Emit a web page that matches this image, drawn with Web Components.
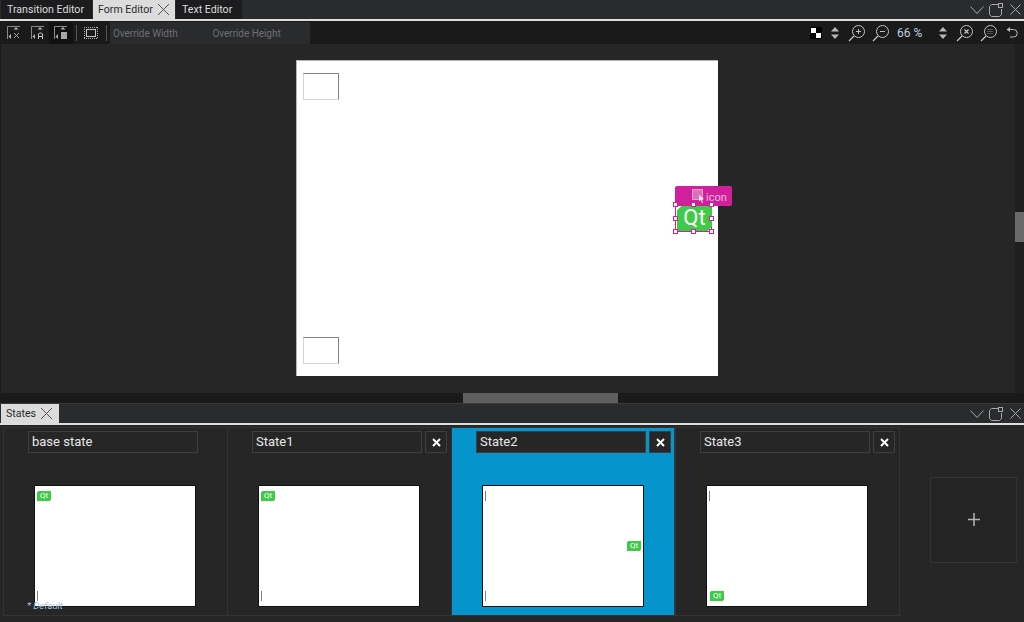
<!DOCTYPE html>
<html>
<head>
<meta charset="utf-8">
<title>Form Editor</title>
<style>
  html, body { margin: 0; height: 100%; background: #262626; overflow: hidden; }
  body { font-family: Roboto, "Noto Sans", sans-serif; font-size: 11px; color: #e6e6e6; }
  app-shell { width: 1024px; height: 622px; }
</style>
</head>
<body>
<app-shell>
  <dock-bar slot="top">
    <dock-tab style="width:91px">Transition Editor</dock-tab>
    <dock-tab style="width:82px" active closable>Form Editor</dock-tab>
    <dock-tab style="width:66px">Text Editor</dock-tab>
  </dock-bar>
  <form-toolbar slot="top"></form-toolbar>
  <form-view slot="top"></form-view>
  <dock-bar slot="bottom">
    <dock-tab style="width:58px" active closable>States</dock-tab>
  </dock-bar>
  <states-view slot="bottom">
    <state-card name="base state" qt="37,491" lines="37,591" base></state-card>
    <state-card name="State1" qt="261,491" lines="261,591"></state-card>
    <state-card name="State2" qt="627,541" lines="485,491;485,591" selected></state-card>
    <state-card name="State3" qt="710,591" lines="709,491"></state-card>
  </states-view>
</app-shell>

<script>
const CLOSE_X = `<svg width="13" height="13" viewBox="0 0 13 13"><path d="M1 1l11 11M12 1L1 12" stroke="currentColor" fill="none"/></svg>`;

class AppShell extends HTMLElement {
  constructor() {
    super();
    this.attachShadow({mode: 'open'}).innerHTML = `<style>
      :host { display: flex; flex-direction: column; }
      .top { display: flex; flex-direction: column; height: 404px; }
      .bottom { display: flex; flex-direction: column; height: 218px; }
    </style>
    <div class="top"><slot name="top"></slot></div>
    <div class="bottom"><slot name="bottom"></slot></div>`;
  }
}

class DockBar extends HTMLElement {
  constructor() {
    super();
    this.attachShadow({mode: 'open'}).innerHTML = `<style>
      :host { display: flex; height: 21px; box-sizing: border-box; background: #2a2b2d; padding-left: 1px;
        border-bottom: 2px solid #dedede; flex: none; color: #a8a8a8; }
      .tabs { display: flex; gap: 1px; flex: 1; }
      .buttons { display: flex; align-items: center; height: 19px; padding-right: 3px; box-sizing: border-box; }
      svg { display: block; flex: none; }
    </style>
    <div class="tabs"><slot></slot></div>
    <div class="buttons">
      <svg width="14" height="14" viewBox="0 0 14 14"><path d="M.5 3.500l6.500 7 6.500-7" stroke="currentColor" fill="none"/></svg>
      <svg style="margin:0 6px 0 5px" width="15" height="14" viewBox="0 0 15 14"><path d="M9 1.500H2.500l-2 2v8l2 2h8l2-2V6" stroke="currentColor" fill="none"/><rect x="9.500" y=".5" width="4" height="4" stroke="currentColor" fill="none"/></svg>
      <svg width="11" height="11" viewBox="0 0 11 11"><path d="M.5.5l10 10M10.500.5l-10 10" stroke="currentColor" fill="none"/></svg>
    </div>`;
  }
}

class DockTab extends HTMLElement {
  constructor() {
    super();
    this.attachShadow({mode: 'open'}).innerHTML = `<style>
      :host { display: flex; align-items: center; height: 19px; box-sizing: border-box;
        padding: 0 0 0 6px; background: #1c1c1e; color: #dcdcdc; font-size: 10.6px; white-space: nowrap; }
      :host([active]) { background: #dcdcdc; color: #2a2a2a; padding: 0 0 0 5px; gap: 4px; }
      svg { display: block; color: #555; flex: none; }
    </style><slot></slot>${this.hasAttribute('closable') ? CLOSE_X : ''}`;
  }
}

class FormToolbar extends HTMLElement {
  constructor() {
    super();
    const lens = inner => `<svg width="18" height="18" viewBox="0 0 18 18"><circle cx="10.500" cy="7.500" r="6" stroke="#c4c4c4" fill="none"/><path d="M6 12l-5 5" stroke="#c4c4c4" stroke-width="1.300" fill="none"/>${inner}</svg>`;
    const updown = `<svg width="10" height="12" viewBox="0 0 10 12"><path d="M5 0l4 4.500H1zM5 12l4-4.500H1z" fill="#b8b8b8"/></svg>`;
    const anchor = inner => `<svg width="14" height="14" viewBox="0 0 14 14"><path d="M.5 13V.5H13" stroke="#8a8a8a" fill="none"/><path d="M4 8l-2.500 2.500L4 13z" fill="#b0b0b0"/><path d="M9 1l2.500 2.500h-5z" fill="#b0b0b0"/>${inner}</svg>`;
    this.attachShadow({mode: 'open'}).innerHTML = `<style>
      :host { display: flex; align-items: center; height: 23px; box-sizing: border-box; border-top: 1px solid #1a1a1a; background: #1a1a1a; flex: none; padding-left: 7px; color: #6e7074; font-size: 10px; }
      svg { display: block; flex: none; }
      .sel { background: #111; width: 24px; height: 22px; display: flex; align-items: center; justify-content: center; margin: 0 3px 0 4px; }
      .sep { width: 1px; height: 16px; background: #555; flex: none; }
      .override { display: flex; align-items: center; width: 200px; height: 22px; margin-left: 3px; background: #2a2b2d; box-sizing: border-box; padding-left: 3px; }
      .override span { width: 100px; letter-spacing: -.05px; white-space: nowrap; }
      .override span + span { padding-left: 2px; }
      .right { margin-left: auto; display: flex; align-items: center; height: 22px; }
      .right > * { flex: none; }
      .check { width: 12px; height: 12px; background: #000; }
      .zoom { color: #bfd0e0; font-size: 12px; width: 41px; }
    </style>
    ${anchor('<path d="M7 7l5 5M12 7l-5 5" stroke="#a8a8a8" fill="none"/>')}
    <span style="width:10px"></span>
    ${anchor('<path d="M7.500 13V8l1-1h2l1 1v5M7.500 10.500h4" stroke="#c4c4c4" fill="none"/>')}
    <span class="sel">${anchor('<rect x="7" y="6" width="6" height="7" fill="#a8a8a8"/>')}</span>
    <span class="sep"></span>
    <svg style="margin:0 8px 0 7px" width="14" height="14" viewBox="0 0 14 14"><rect x="2.500" y="3.500" width="9" height="7" stroke="#c4c4c4" fill="none"/><path d="M0 1.500h14M0 12.500h14M.5 1v12M13.500 1v12" stroke="#b0b0b0" stroke-dasharray="1 1" fill="none"/></svg>
    <span class="sep"></span>
    <div class="override"><span>Override Width</span><span>Override Height</span></div>
    <div class="right">
      <svg class="check" viewBox="0 0 12 12"><rect x="1" y="1" width="5" height="5" fill="#fff"/><rect x="6" y="6" width="5" height="5" fill="#fff"/></svg>
      <span style="width:8px"></span>${updown}<span style="width:8px"></span>
      ${lens('<path d="M8 7.500h5M10.500 5v5" stroke="#c4c4c4" fill="none"/>')}
      <span style="width:6px"></span>
      ${lens('<path d="M8 7.500h5" stroke="#c4c4c4" fill="none"/>')}
      <span style="width:7px"></span>
      <span class="zoom">66 %</span>
      ${updown}<span style="width:8px"></span>
      ${lens('<path d="M8.500 5.500l4 4M12.500 5.500l-4 4" stroke="#c4c4c4" stroke-width="1.300" fill="none"/>')}
      <span style="width:6px"></span>
      ${lens('<path d="M7.500 5.500h6M7.500 7.500h6M7.500 9.500h6" stroke="#999" stroke-dasharray="1 1" fill="none"/>')}
      <span style="width:8px"></span>
      <svg width="12" height="12" viewBox="0 0 12 12"><path d="M3 2.500h4.500a3.500 3.500 0 0 1 0 7.500H4" stroke="#b8b8b8" fill="none"/><path d="M4 0v5L.5 2.500z" fill="#b8b8b8"/></svg>
      <span style="width:6px"></span>
    </div>`;
  }
}

class QtLogo extends HTMLElement {
  constructor() {
    super();
    this.attachShadow({mode: 'open'}).innerHTML = `<style>
      :host { --cut: 3px; display: flex; align-items: center; justify-content: center; color: #fff; line-height: 1;
        background: linear-gradient(135deg, transparent var(--cut), #3fcb47 var(--cut), #3fcb47 calc(100% - var(--cut)), transparent calc(100% - var(--cut))); }
    </style><slot></slot>`;
  }
}

class FormView extends HTMLElement {
  constructor() {
    super();
    const handles = [[0,0],[18,0],[36,0],[0,14],[36,14],[0,27],[18,27],[36,27]]
      .map(([x, y]) => `<i class="handle" style="left:${x}px;top:${y}px"></i>`).join('');
    this.attachShadow({mode: 'open'}).innerHTML = `<style>
      :host { display: grid; grid-template-columns: 1015px 9px; grid-template-rows: 349px 11px; flex: none; background: #262626; }
      .area { position: relative; padding: 16px 0 0 295px; border-left: 1px solid #1a1a1a; box-sizing: border-box; overflow: hidden; }
      .form { position: relative; width: 422px; height: 316px; background: #fff; box-shadow: inset 1px 1px 0 #b4b4b4; }
      .box { position: absolute; left: 7px; width: 34px; height: 25px; border: 1px solid #d4d4d4; border-top-color: #808080; border-right-color: #808080; }
      .label { position: absolute; left: 379px; top: 126px; width: 57px; height: 20px; background: #d0209c; border-radius: 2px;
        color: #efb8de; font-size: 11px; line-height: 24px; box-sizing: border-box; padding-left: 31px; }
      .label svg { position: absolute; left: 17px; top: 3px; }
      .sel { position: absolute; left: 377px; top: 142px; width: 41px; height: 32px; }
      .frame { position: absolute; left: 2px; top: 2px; width: 37px; height: 28px; border: 1px solid #d0209c; box-sizing: border-box; }
      qt-logo { position: absolute; left: 4px; top: 4px; width: 35px; height: 25px; font-size: 22px; box-sizing: border-box; padding-bottom: 2px; }
      .handle { position: absolute; width: 3px; height: 3px; background: #fff; border: 1px solid #d0209c; }
      .vbar { background: #1f1f1f; position: relative; grid-row: 1; grid-column: 2; }
      .vbar i { position: absolute; left: 0; top: 168px; width: 9px; height: 30px; background: #6a6a6a; }
      .hbar { background: #1a1a1a; position: relative; grid-column: 1 / span 2; box-sizing: border-box; border-bottom: 1px solid #3a3a3a; }
      .hbar i { position: absolute; left: 463px; top: 0; width: 155px; height: 10px; background: #5f5f5f; }
    </style>
    <div class="area">
      <div class="form">
        <div class="box" style="top:13px"></div>
        <div class="box" style="top:277px"></div>
        <div class="label"><svg width="14" height="14" viewBox="0 0 14 14"><rect x=".5" y=".5" width="10" height="10" stroke="#e8a0d0" fill="#dc70bc"/><path d="M7 6l5 4-2 .5 1 3-1 .5-1-3-2 1z" fill="#eee"/></svg>icon</div>
        <div class="sel"><div class="frame"></div><qt-logo>Qt</qt-logo>${handles}</div>
      </div>
    </div>
    <div class="vbar"><i></i></div>
    <div class="hbar"><i></i></div>`;
  }
}

class StatesView extends HTMLElement {
  constructor() {
    super();
    this.attachShadow({mode: 'open'}).innerHTML = `<style>
      :host { display: flex; flex: 1; background: #262626; padding: 2px 0 0 3px; box-sizing: border-box; position: relative; }
      .add { width: 87px; height: 86px; margin: 50px 0 0 30px; box-sizing: border-box; border: 1px solid #333; background: #242424; display: flex; align-items: center; justify-content: center; flex: none; }
      .default { position: absolute; left: 27px; top: 175px; font-size: 9.5px; font-style: italic; color: #a9c4de; white-space: nowrap; }
    </style>
    <slot></slot>
    <div class="add"><svg style="margin-bottom:1px" width="12" height="13" viewBox="0 0 12 13"><path d="M6 0v13M0 6.500h12" stroke="#b4b4b4" stroke-width="1.500"/></svg></div>
    <div class="default">* Default</div>`;
  }
}

class StateCard extends HTMLElement {
  constructor() {
    super();
    // marks on the little form preview, given in page coords by the user of the element
    const left = {'base state': 35, State1: 259, State2: 483, State3: 707}[this.getAttribute('name')];
    const [qx, qy] = this.getAttribute('qt').split(',').map(Number);
    const lines = this.getAttribute('lines').split(';').map(l => {
      const [x, y] = l.split(',').map(Number);
      return `<i class="line" style="left:${x - left}px;top:${y - 486}px"></i>`;
    }).join('');
    const hasClose = !this.hasAttribute('base');
    this.attachShadow({mode: 'open'}).innerHTML = `<style>
      :host { display: block; width: 224px; height: 189px; box-sizing: border-box; flex: none; background: #262626;
        border: 1px solid #333; border-right-width: 0; position: relative; }
      :host(:last-child) { width: 225px; border-right-width: 1px; }
      :host([selected]) { background: #0694cc; border-right: 1px solid #2c3a42; }
      .head { display: flex; gap: 3px; margin: 3px 0 0 24px; }
      .name { width: 170px; height: 22px; box-sizing: border-box; border: 1px solid #3e3e3e; padding-left: 3px;
        font-size: 13px; line-height: 19px; color: #e8e8e8; background: #262626; }
      .del { width: 22px; height: 22px; box-sizing: border-box; border: 1px solid #3e3e3e; background: #262626;
        display: flex; align-items: center; justify-content: center; }
      .thumb { position: relative; width: 160px; height: 120px; margin: 33px 0 0 31px; background: #fff; outline: 1px solid #111; }
      .line { position: absolute; width: 1px; height: 10px; background: #808080; }
      qt-logo { --cut: 1px; position: absolute; width: 14px; height: 10px; font-size: 8px; left: ${qx - left}px; top: ${qy - 486}px; }
    </style>
    <div class="head"><div class="name">${this.getAttribute('name')}</div>
    ${hasClose ? `<div class="del"><svg width="9" height="9" viewBox="0 0 9 9"><path d="M1 1l7 7M8 1L1 8" stroke="#fff" stroke-width="2"/></svg></div>` : ''}</div>
    <div class="thumb">${lines}<qt-logo>Qt</qt-logo></div>`;
  }
}

customElements.define('app-shell', AppShell);
customElements.define('dock-bar', DockBar);
customElements.define('dock-tab', DockTab);
customElements.define('form-toolbar', FormToolbar);
customElements.define('qt-logo', QtLogo);
customElements.define('form-view', FormView);
customElements.define('states-view', StatesView);
customElements.define('state-card', StateCard);
</script>
</body>
</html>
